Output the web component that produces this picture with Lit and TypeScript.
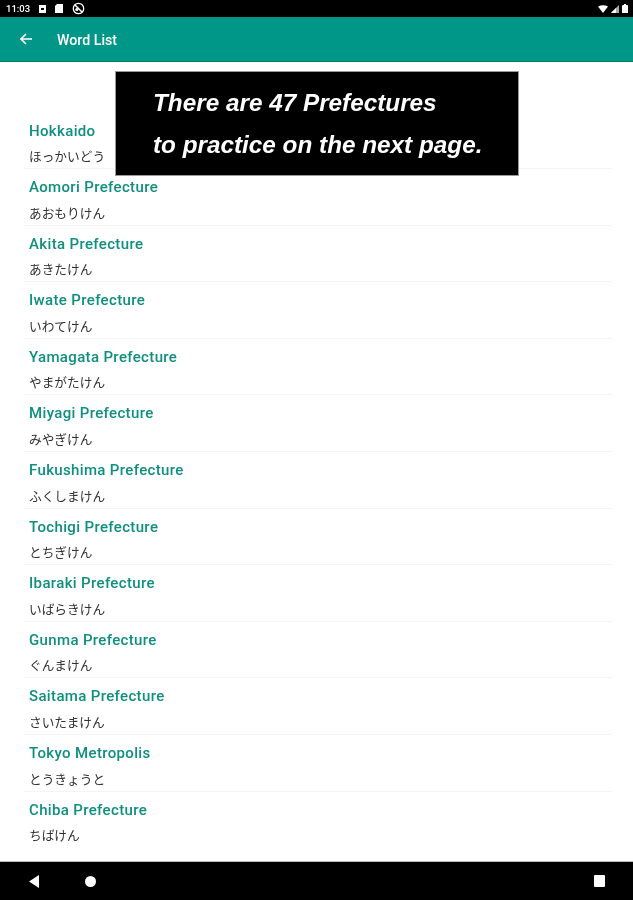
import {css, html, LitElement, svg} from 'lit';
import {customElement} from 'lit/decorators.js';

const WORDS: Array<[string, string]> = [
  ['Hokkaido', 'ほっかいどう'],
  ['Aomori Prefecture', 'あおもりけん'],
  ['Akita Prefecture', 'あきたけん'],
  ['Iwate Prefecture', 'いわてけん'],
  ['Yamagata Prefecture', 'やまがたけん'],
  ['Miyagi Prefecture', 'みやぎけん'],
  ['Fukushima Prefecture', 'ふくしまけん'],
  ['Tochigi Prefecture', 'とちぎけん'],
  ['Ibaraki Prefecture', 'いばらきけん'],
  ['Gunma Prefecture', 'ぐんまけん'],
  ['Saitama Prefecture', 'さいたまけん'],
  ['Tokyo Metropolis', 'とうきょうと'],
  ['Chiba Prefecture', 'ちばけん'],
];

@customElement('app-root')
export class AppRoot extends LitElement {
  static override styles = css`
    :host {
      display: flex;
      flex-direction: column;
      position: relative;
      width: 633px;
      height: 900px;
      overflow: hidden;
      background: #fff;
      font-family: Roboto, 'Noto Sans CJK JP', sans-serif;
    }

    .status {
      flex: none;
      height: 17px;
      background: #000;
      color: #fff;
      display: flex;
      align-items: center;
      padding: 0 5px 0 6px;
      font-size: 9.5px;
      font-weight: 500;
      filter: blur(0.4px);
    }

    .status .left {
      display: flex;
      align-items: center;
      gap: 9px;
    }

    .status .right {
      margin-left: auto;
      display: flex;
      align-items: center;
      gap: 3px;
    }

    .toolbar {
      flex: none;
      height: 45px;
      background: #009688;
      border-bottom: 1px solid #00806f;
      box-sizing: border-box;
      display: flex;
      align-items: center;
      color: #fff;
    }

    .back {
      width: 12px;
      height: 12px;
      margin-left: 20px;
      filter: blur(0.3px);
    }

    .title {
      margin-left: 25px;
      margin-top: 2px;
      font-size: 14.2px;
      font-weight: 500;
      filter: blur(0.5px);
    }

    .list {
      flex: 1;
      padding: 50.5px 21px 0 24px;
    }

    .row {
      box-sizing: border-box;
      height: 56.6px;
      padding: 10px 0 0 5px;
      border-bottom: 1px solid #f4f4f4;
    }

    .row:last-child {
      border-bottom: none;
    }

    .en {
      color: #0f8f7f;
      font-size: 15px;
      font-weight: 500;
      line-height: 17px;
      letter-spacing: 0.35px;
      filter: blur(0.5px);
    }

    .ja {
      margin-top: 8.5px;
      color: #333;
      font-size: 12.7px;
      line-height: 17px;
      filter: blur(0.5px);
    }

    .banner {
      position: absolute;
      left: 115px;
      top: 71px;
      box-sizing: border-box;
      width: 404px;
      height: 105px;
      background: #000;
      border: 1px solid #999;
      color: #fff;
      font-family: 'Liberation Sans', Arial, sans-serif;
      font-size: 24.3px;
      font-style: italic;
      font-weight: 700;
      line-height: 42px;
      padding: 10px 0 0 37px;
    }

    .banner div {
      filter: blur(0.5px);
    }

    .nav {
      flex: none;
      height: 39px;
      background: #000;
      border-top: 1px solid #bbb;
      box-sizing: border-box;
      display: flex;
      align-items: center;
      padding: 0 28px 0 29px;
    }

    .nav .home {
      width: 11px;
      height: 11px;
      margin-left: 46px;
      border-radius: 50%;
      background: #fff;
    }

    .nav .recent {
      width: 11px;
      height: 12px;
      margin-left: auto;
      border-radius: 1px;
      background: #fff;
    }
  `;

  private icon(width: number, height: number, content: unknown) {
    return html`<svg width=${width} height=${height} viewBox="0 0 ${width} ${height}"
      fill="#fff">${content}</svg>`;
  }

  override render() {
    return html`
      <div class="status">
        <div class="left">
          <span class="time">11:03</span>
          ${this.icon(7, 8, svg`<path fill-rule="evenodd" d="M0 0h7v8H0zM2 3v2h3V3z"/>`)}
          ${this.icon(8, 9, svg`<path d="M2 0h6v9H0V2z"/>`)}
          ${this.icon(13, 13, svg`
            <circle cx="6.5" cy="6.5" r="5.2" fill="none" stroke="#fff" stroke-width="1.3"/>
            <path d="M3 3l7 7" stroke="#fff" stroke-width="1.5"/>
            <circle cx="4.8" cy="7.6" r="1.5"/>`)}
        </div>
        <div class="right">
          ${this.icon(10, 8, svg`<path d="M0 1.5Q5-1 10 1.5L5 8z"/>`)}
          ${this.icon(8, 8, svg`<path d="M8 0v8H0z" fill="#aaa"/><path d="M5 3v5H0z"/>`)}
          ${this.icon(6, 9, svg`<path d="M1 1h1V0h2v1h1q1 0 1 1v7H0V2q0-1 1-1z"/>`)}
        </div>
      </div>
      <div class="toolbar">
        <svg class="back" viewBox="0 0 12 12" fill="none" stroke="#fff" stroke-width="1.6">
          <path d="M12 6H1.5M6 1L1 6l5 5"/>
        </svg>
        <span class="title">Word List</span>
      </div>
      <div class="list">
        ${WORDS.map(
          ([en, ja]) => html`
            <div class="row">
              <div class="en">${en}</div>
              <div class="ja" lang="ja">${ja}</div>
            </div>
          `
        )}
      </div>
      <div class="banner">
        <div>There are 47 Prefectures</div>
        <div>to practice on the next page.</div>
      </div>
      <div class="nav">
        <svg width="10" height="13" viewBox="0 0 10 13" fill="#fff"><path d="M0 6.5L10 0v13z"/></svg>
        <div class="home"></div>
        <div class="recent"></div>
      </div>
    `;
  }
}
